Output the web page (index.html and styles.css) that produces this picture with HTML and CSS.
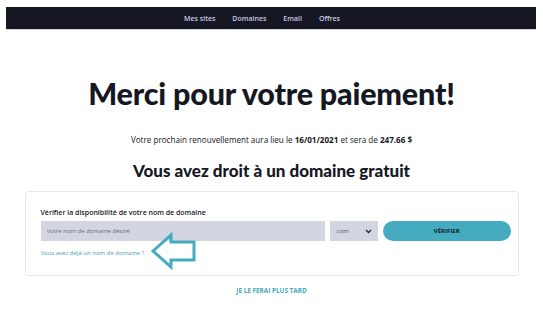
FILE: index.html
```html
<!DOCTYPE html>
<html lang="fr">
<head>
  <meta charset="UTF-8" />
  <title>Merci pour votre paiement</title>
  <link rel="stylesheet" href="styles.css">
</head>
<body>
  <nav class="topnav">
    <a href="#">Mes sites</a>
    <a href="#">Domaines</a>
    <a href="#">Email</a>
    <a href="#">Offres</a>
  </nav>

  <div class="page">
    <h1>Merci pour votre paiement!</h1>
    <p class="renew">Votre prochain renouvellement aura lieu le <b>16/01/2021</b> et sera de <b>247.66 $</b></p>
    <h2>Vous avez droit à un domaine gratuit</h2>

    <div class="card">
      <label class="card-label">Vérifier la disponibilité de votre nom de domaine</label>
      <div class="search-row">
        <input class="domain-input" type="text" placeholder="Votre nom de domaine désiré">
        <div class="tld-select">
          <span>.com</span>
          <svg width="7" height="5" viewBox="0 0 7 5"><path d="M1 1l2.5 2.5L6 1" fill="none" stroke="#222" stroke-width="1.3"/></svg>
        </div>
        <button class="check-btn">VÉRIFIER</button>
      </div>
      <a class="own-domain" href="#">Vous avez déjà un nom de domaine ?</a>

      <!-- annotation arrow -->
      <svg class="hint-arrow" width="48" height="38" viewBox="0 0 48 38">
        <path d="M3 19 L21 3 L21 10 L44 10 L44 28 L21 28 L21 35 Z" fill="none" stroke="#45abc1" stroke-width="3" stroke-linejoin="miter"/>
      </svg>
    </div>

    <a class="later" href="#">JE LE FERAI PLUS TARD</a>
  </div>
</body>
</html>
```

FILE: styles.css
```css
:root {
  --dark: #151822;
  --teal: #45abc1;
  --field: #d3d6e0;
  --font: 'Open Sans', sans-serif;
  --head: 'Lato', sans-serif;
}
* {
  box-sizing: border-box;
}
body {
  margin: 0;
  font-family: var(--font);
  color: var(--dark);
  background: #fff;
}
.topnav {
  margin: 7px 7px 0 6px;
  height: 23px;
  background: var(--dark);
  border-bottom: 1px solid #d6d8e0;
  display: flex;
  justify-content: center;
  align-items: center;
  gap: 17px;
  padding-right: 18px;
}
.topnav a,
.topnav a:visited {
  color: #c9c9e6;
  text-decoration: none;
  font-size: 7px;
  font-weight: 600;
}
.page {
  text-align: center;
}
h1 {
  font-family: var(--head);
  font-weight: 900;
  font-size: 30.5px;
  margin: 44px 0 0;
  line-height: 38px;
  letter-spacing: -0.2px;
}
.renew {
  font-size: 8.1px;
  margin: 22px 0 0;
  line-height: 12px;
}
h2 {
  font-family: var(--head);
  font-weight: 900;
  font-size: 17px;
  margin: 14px 0 0;
  line-height: 22px;
}
.card {
  position: relative;
  width: 494px;
  margin: 9px auto 0;
  padding: 16px 7px 0 15px;
  height: 85px;
  border: 1px solid #e6e7ee;
  border-radius: 3px;
  text-align: left;
}
.card-label {
  display: block;
  font-size: 7px;
  font-weight: 600;
  line-height: 9px;
}
.search-row {
  display: flex;
  gap: 5px;
  margin-top: 4px;
}
.domain-input {
  width: 286px;
  height: 20px;
  border: 0;
  background: var(--field);
  padding: 0 6px;
  font-family: var(--font);
  font-size: 6px;
}
.domain-input::placeholder {
  color: #666a78;
}
.tld-select {
  width: 48px;
  height: 20px;
  background: var(--field);
  display: flex;
  align-items: center;
  justify-content: space-between;
  padding: 0 6px 0 5px;
  font-size: 6px;
  color: #555;
}
.check-btn {
  width: 128px;
  height: 20px;
  border: 0;
  border-radius: 10px;
  background: var(--teal);
  color: var(--dark);
  font-family: var(--font);
  font-weight: 700;
  font-size: 6px;
}
.own-domain {
  display: block;
  margin-top: 8px;
  font-size: 6px;
  color: #3d9fb5;
  text-decoration: none;
}
.hint-arrow {
  position: absolute;
  left: 124px;
  top: 40px;
}
.later {
  display: inline-block;
  margin-top: 7px;
  font-size: 6.4px;
  font-weight: 700;
  color: var(--teal);
  text-decoration: none;
}
```
